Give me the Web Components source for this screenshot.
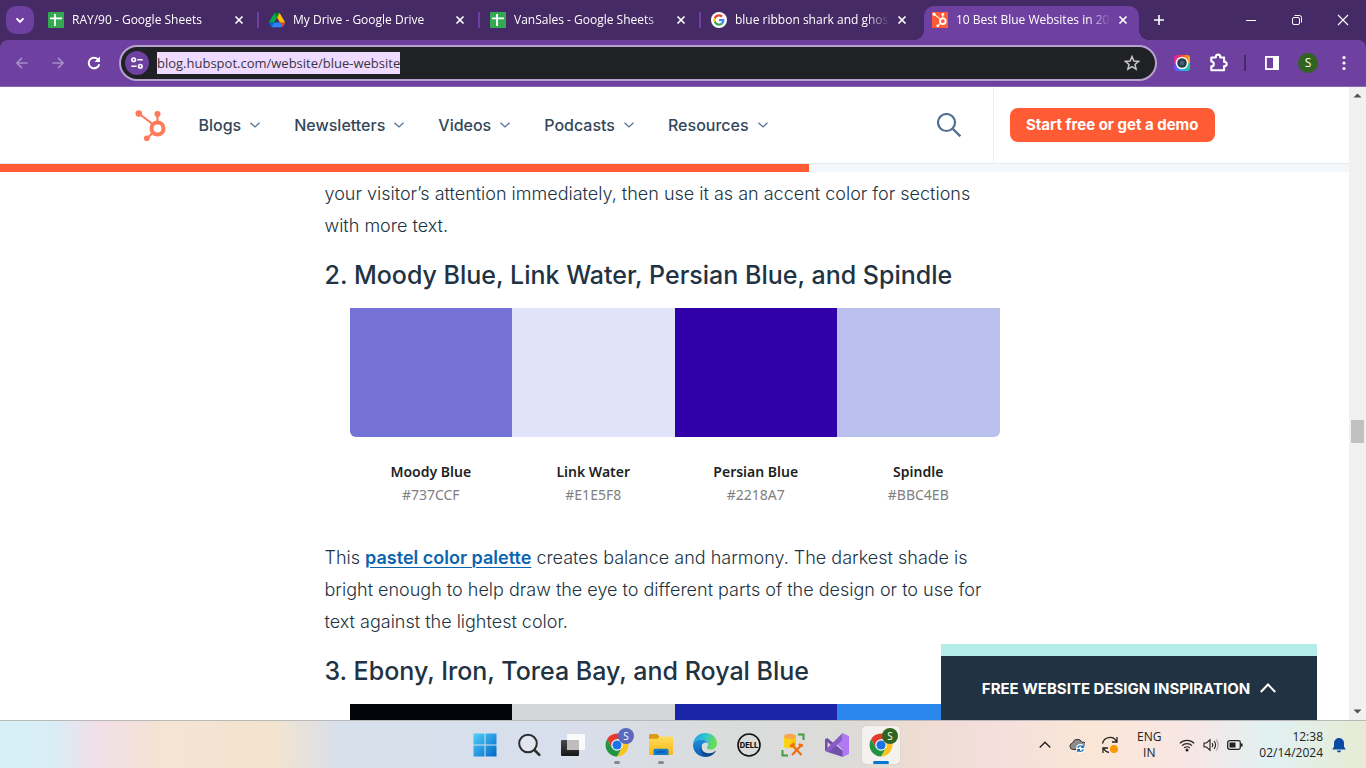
<!DOCTYPE html>
<html lang="en">
<head>
<meta charset="utf-8">
<title>10 Best Blue Websites</title>
<style>
  html, body {
    height: 100%;
    margin: 0;
  }
  body {
    font-family: Inter, "Open Sans", sans-serif;
    background: #fff;
  }
  blog-article p a {
    color: #0b64b0;
    font-weight: 600;
    text-decoration-thickness: 1px;
    text-underline-offset: 3px;
  }
</style>
</head>
<body>
<browser-window>
  <tab-strip slot="tabs">
    <browser-tab icon="sheets" label="RAY/90 - Google Sheets"></browser-tab>
    <browser-tab icon="drive" label="My Drive - Google Drive"></browser-tab>
    <browser-tab icon="sheets" label="VanSales - Google Sheets"></browser-tab>
    <browser-tab icon="google" label="blue ribbon shark and ghost"></browser-tab>
    <browser-tab icon="hubspot-tile" label="10 Best Blue Websites in 202" active></browser-tab>
  </tab-strip>
  <tool-bar slot="toolbar" url="blog.hubspot.com/website/blue-website"></tool-bar>

  <site-header slot="header" progress="60">
    <nav-item label="Blogs"></nav-item>
    <nav-item label="Newsletters"></nav-item>
    <nav-item label="Videos"></nav-item>
    <nav-item label="Podcasts"></nav-item>
    <nav-item label="Resources"></nav-item>
  </site-header>

  <blog-article>
    <p>your visitor’s attention immediately, then use it as an accent color for sections with more text.</p>
    <h3>2. Moody Blue, Link Water, Persian Blue, and Spindle</h3>
    <color-palette>
      <color-swatch name="Moody Blue" code="#737CCF" fill="#7673d7"></color-swatch>
      <color-swatch name="Link Water" code="#E1E5F8" fill="#e1e3fb"></color-swatch>
      <color-swatch name="Persian Blue" code="#2218A7" fill="#3000a9"></color-swatch>
      <color-swatch name="Spindle" code="#BBC4EB" fill="#bac0ee"></color-swatch>
    </color-palette>
    <p>This <a href="#pastel">pastel color palette</a> creates balance and harmony. The darkest shade is bright enough to help draw the eye to different parts of the design or to use for text against the lightest color.</p>
    <h3>3. Ebony, Iron, Torea Bay, and Royal Blue</h3>
    <color-palette>
      <color-swatch fill="#020509"></color-swatch>
      <color-swatch fill="#d3d5d8"></color-swatch>
      <color-swatch fill="#1b26a6"></color-swatch>
      <color-swatch fill="#2b87ec"></color-swatch>
    </color-palette>
  </blog-article>

  <promo-drawer slot="promo">FREE WEBSITE DESIGN INSPIRATION</promo-drawer>
  <scroll-rail slot="rail"></scroll-rail>

  <task-bar slot="taskbar">
    <task-app icon="windows" label="Start"></task-app>
    <task-app icon="magnifier" label="Search"></task-app>
    <task-app icon="taskview" label="Task view"></task-app>
    <task-app icon="chrome" label="Chrome" badge="S" badge-color="#5a68bd" running></task-app>
    <task-app icon="folder" label="File Explorer" running></task-app>
    <task-app icon="edge" label="Edge"></task-app>
    <task-app icon="dell" label="Dell"></task-app>
    <task-app icon="dbtools" label="Database tools"></task-app>
    <task-app icon="vs" label="Visual Studio"></task-app>
    <task-app icon="chrome" label="Chrome" badge="S" badge-color="#31651f" active></task-app>
  </task-bar>
</browser-window>

<script>
(() => {
  const SPROCKET = (color) => `
    <g fill="${color}" stroke="${color}">
      <path d="M4 4L17 14M22 4V11M11 29L17 23" fill="none" stroke-width="2.2"/>
      <circle cx="22" cy="18.5" r="6" fill="none" stroke-width="4"/>
      <g stroke="none"><circle cx="3.3" cy="3.6" r="3.3"/><circle cx="22" cy="4" r="3"/><circle cx="11.3" cy="28.3" r="2.9"/></g>
    </g>`;

  // name: [viewBox, markup]
  const ICONS = {
    sheets: ['0 0 16 16', '<rect width="16" height="16" rx="1" fill="#34a853"/><path d="M2 6.3H14M7 2V14" stroke="#fff" stroke-width="1.8"/>'],
    drive: ['0 0 87.3 78', `
      <path d="m6.6 66.85 3.85 6.65c.8 1.4 1.95 2.5 3.3 3.3l13.75-23.8h-27.5c0 1.55.4 3.1 1.2 4.5z" fill="#0066da"/>
      <path d="m43.65 25-13.75-23.8c-1.35.8-2.5 1.9-3.3 3.3l-25.4 44a9.06 9.06 0 0 0 -1.2 4.5h27.5z" fill="#00ac47"/>
      <path d="m73.55 76.8c1.35-.8 2.5-1.9 3.3-3.3l1.6-2.75 7.65-13.25c.8-1.4 1.2-2.95 1.2-4.5h-27.502l5.852 11.5z" fill="#ea4335"/>
      <path d="m43.65 25 13.75-23.8c-1.35-.8-2.9-1.2-4.5-1.2h-18.5c-1.6 0-3.15.45-4.5 1.2z" fill="#00832d"/>
      <path d="m59.8 53h-32.3l-13.75 23.8c1.35.8 2.9 1.2 4.5 1.2h50.8c1.6 0 3.15-.45 4.5-1.2z" fill="#2684fc"/>
      <path d="m73.4 26.5-12.7-22c-.8-1.4-1.95-2.5-3.3-3.3l-13.75 23.8 16.15 28h27.45c0-1.55-.4-3.1-1.2-4.5z" fill="#ffba00"/>`],
    google: ['-10 -10 68 68', `
      <circle cx="24" cy="24" r="34" fill="#fff"/>
      <path fill="#EA4335" d="M24 9.5c3.54 0 6.71 1.22 9.21 3.6l6.85-6.85C35.9 2.38 30.47 0 24 0 14.62 0 6.51 5.38 2.56 13.22l7.98 6.19C12.43 13.72 17.74 9.5 24 9.5z"/>
      <path fill="#4285F4" d="M46.98 24.55c0-1.57-.15-3.09-.38-4.55H24v9.02h12.94c-.58 2.96-2.26 5.48-4.78 7.18l7.73 6c4.51-4.18 7.09-10.36 7.09-17.65z"/>
      <path fill="#FBBC05" d="M10.53 28.59c-.48-1.45-.76-2.99-.76-4.59s.27-3.14.76-4.59l-7.98-6.19C.92 16.46 0 20.12 0 24c0 3.88.92 7.54 2.56 10.78l7.97-6.19z"/>
      <path fill="#34A853" d="M24 48c6.48 0 11.93-2.13 15.89-5.81l-7.73-6c-2.15 1.45-4.92 2.3-8.16 2.3-6.26 0-11.57-4.22-13.47-9.91l-7.98 6.19C6.51 42.62 14.62 48 24 48z"/>`],
    'hubspot-tile': ['-1 -1 34 34', `<rect x="-1" y="-1" width="34" height="34" fill="#ff5c35"/>${SPROCKET('#fff')}`],
    hubspot: ['0 0 30 31', SPROCKET('#ff7a59')],
    close: ['0 0 16 16', '<path d="M4.5 4.5L11.5 11.5M11.5 4.5L4.5 11.5" stroke="currentColor" stroke-width="1.7"/>'],
    down: ['0 0 16 16', '<path d="M4.5 6.3L8 9.8L11.5 6.3" fill="none" stroke="currentColor" stroke-width="1.9"/>'],
    plus: ['0 0 16 16', '<path d="M8 3V13M3 8H13" stroke="currentColor" stroke-width="1.6"/>'],
    minimize: ['0 0 16 16', '<path d="M3 8.5H13" stroke="currentColor"/>'],
    restore: ['0 0 16 16', '<rect x="3.5" y="5.5" width="7" height="7" rx="1.5" fill="none" stroke="currentColor"/><path d="M5.5 3.5H10.5A2 2 0 0 1 12.5 5.5V10.5" fill="none" stroke="currentColor"/>'],
    exit: ['0 0 16 16', '<path d="M3 3L13 13M13 3L3 13" stroke="currentColor" stroke-width="1.1"/>'],
    back: ['0 0 16 16', '<path d="M14.5 8H2.5M8 2.2L2.2 8L8 13.8" fill="none" stroke="currentColor" stroke-width="1.9"/>'],
    forward: ['0 0 16 16', '<path d="M1.5 8H13.5M8 2.2L13.8 8L8 13.8" fill="none" stroke="currentColor" stroke-width="1.9"/>'],
    reload: ['0 0 16 16', '<path d="M13.2 9.2A5.3 5.3 0 1 1 11.8 4.3L13.2 5.7" fill="none" stroke="currentColor" stroke-width="2"/><path d="M14 1.5V7H8.5Z" fill="currentColor"/>'],
    tune: ['0 0 16 16', '<g fill="none" stroke="currentColor" stroke-width="1.9"><circle cx="4.2" cy="4.3" r="2"/><path d="M8.5 4.3H14.5M1.5 11.7H7.5"/><circle cx="11.8" cy="11.7" r="2"/></g>'],
    star: ['0 0 16 16', '<path d="M8 1.6L9.9 6L14.6 6.4L11 9.5L12.1 14.1L8 11.6L3.9 14.1L5 9.5L1.4 6.4L6.1 6Z" fill="none" stroke="currentColor" stroke-width="1.5"/>'],
    camera: ['0 0 16 16', `
      <defs><linearGradient id="a" x1="0" y1="0" x2="1" y2="0"><stop stop-color="#e91ea0"/><stop offset=".5" stop-color="#f5423c"/><stop offset="1" stop-color="#ffb300"/></linearGradient>
      <linearGradient id="b" x1="0" y1="0" x2="1" y2="0"><stop stop-color="#7b3ff2"/><stop offset=".5" stop-color="#1fa2ff"/><stop offset="1" stop-color="#20d38a"/></linearGradient></defs>
      <path d="M0 8V3A3 3 0 0 1 3 0H13A3 3 0 0 1 16 3V8Z" fill="url(#a)"/><path d="M0 8V13A3 3 0 0 0 3 16H13A3 3 0 0 0 16 13V8Z" fill="url(#b)"/>
      <circle cx="8" cy="8" r="6.3" fill="#fff"/><circle cx="8" cy="8" r="4.8" fill="#2c3d4c"/><circle cx="8" cy="8" r="2.2" fill="#48637a"/>`],
    puzzle: ['0 0 18 18', '<path d="M3 4H7V3.5A2 2 0 0 1 11 3.5V4H14.5V8H15A1.8 1.8 0 0 1 15 11.7H14.5V15.5H3V12A2.2 2.2 0 0 0 3 7.6Z" fill="none" stroke="currentColor" stroke-width="1.9" stroke-linejoin="round"/>'],
    panel: ['0 0 16 16', '<rect x="1.9" y="1.9" width="12.2" height="12.2" fill="none" stroke="currentColor" stroke-width="1.8"/><path d="M9 2H14V14H9Z" fill="currentColor"/>'],
    dots: ['0 0 16 16', '<g fill="currentColor"><circle cx="8" cy="2.5" r="1.6"/><circle cx="8" cy="8" r="1.6"/><circle cx="8" cy="13.5" r="1.6"/></g>'],
    chevron: ['0 0 10 10', '<path d="M.5 2.8L5 7L9.5 2.8" fill="none" stroke="#516f90" stroke-width="1.2"/>'],
    search: ['0 0 24 24', '<circle cx="9.5" cy="9.5" r="8.5" fill="none" stroke="#516f90" stroke-width="2.2"/><path d="M15.5 15.5L23.3 23.3" stroke="#516f90" stroke-width="2.4"/>'],
    up: ['0 0 16 16', '<path d="M.8 12L8 4.5L15.2 12" fill="none" stroke="currentColor" stroke-width="2"/>'],
    'arrow-up': ['0 0 9 9', '<path d="M.5 6.5L4.5 2.5L8.5 6.5Z" fill="#505050"/>'],
    'arrow-down': ['0 0 9 9', '<path d="M.5 2.5L4.5 6.5L8.5 2.5Z" fill="#505050"/>'],
    windows: ['0 0 24 24', '<defs><linearGradient id="w" x1="0" y1="0" x2="1" y2="1"><stop stop-color="#50d0fb"/><stop offset="1" stop-color="#0067c5"/></linearGradient></defs><path d="M.5.5H11.5V11.5H.5ZM12.5.5H23.5V11.5H12.5ZM.5 12.5H11.5V23.5H.5ZM12.5 12.5H23.5V23.5H12.5Z" fill="url(#w)"/>'],
    magnifier: ['0 0 24 24', '<circle cx="11" cy="10.5" r="8.8" fill="#e8edf4" fill-opacity=".6" stroke="#2d2d2d" stroke-width="2"/><path d="M17.5 17L22.3 21.8" stroke="#2d2d2d" stroke-width="2.6" stroke-linecap="round"/>'],
    taskview: ['0 0 24 24', '<defs><linearGradient id="t" x1="0" y1="0" x2="0" y2="1"><stop stop-color="#4a4a4a"/><stop offset="1" stop-color="#161616"/></linearGradient></defs><rect y="7" width="18" height="16" rx="1" fill="url(#t)"/><rect x="6" y="1" width="18" height="16" rx="1" fill="#fafafa"/><path d="M6 7H18V17H6Z" fill="#bdbdbd"/>'],
    chrome: ['1 1 46 46', `
      <path d="M4.95 13A22 22 0 0 1 43.05 13H24L14.47 29.5Z" fill="#e33b2e"/>
      <path d="M43.05 13A22 22 0 0 1 24 46L33.53 29.5L24 13Z" fill="#fcc31e"/>
      <path d="M24 46A22 22 0 0 1 4.95 13L14.47 29.5H33.53Z" fill="#229342"/>
      <circle cx="24" cy="24" r="11" fill="#fff"/><circle cx="24" cy="24" r="8.8" fill="#1a73e8"/>`],
    folder: ['0 0 24 24', '<defs><linearGradient id="f" x1="0" y1="0" x2="0" y2="1"><stop stop-color="#ffdb5c"/><stop offset="1" stop-color="#fcb813"/></linearGradient></defs><path d="M0 2.5A1.5 1.5 0 0 1 1.5 1H8L10.5 3.5V8H0Z" fill="#dd9a10"/><path d="M0 5.8H8.5L10.8 3.5H22.5A1.5 1.5 0 0 1 24 5V20.5A1.5 1.5 0 0 1 22.5 22H1.5A1.5 1.5 0 0 1 0 20.5Z" fill="url(#f)"/><path d="M4.5 22V17.5A1.8 1.8 0 0 1 6.3 15.7H17.7A1.8 1.8 0 0 1 19.5 17.5V22Z" fill="#1479d0"/><path d="M8 18.9H16" stroke="#0b4f9a" stroke-width="1.2"/>'],
    edge: ['0 0 24 24', `
      <defs><linearGradient id="e" x1="0" y1="0" x2="1" y2=".3"><stop stop-color="#1b9de2"/><stop offset=".5" stop-color="#2cc3d5"/><stop offset="1" stop-color="#6bdd54"/></linearGradient>
      <linearGradient id="g" x1="0" y1="0" x2="0" y2="1"><stop stop-color="#1a8fdb"/><stop offset="1" stop-color="#0c5cb4"/></linearGradient></defs>
      <path d="M.1 11C.8 4.5 6 0 12.2 0C19 0 24 4.8 24 10.4C24 14.2 21 16.5 17.8 16.5C15 16.5 13.8 15.5 13.8 14.7C13.8 14 15 13.4 15 11.6C15 9 12.5 6.6 8.5 6.6C4.5 6.6 1.5 8.5.1 11Z" fill="url(#e)"/>
      <path d="M.1 11C1.8 8 5 6.6 8.5 6.6C12 6.6 14.3 8.4 14.8 10.5C13.5 9.2 11.5 9.3 10 10.5C7 13 8 18.5 12.8 21.3C14 22 14.8 22.8 15 23.5C8 25.3.3 20.5.1 12.5Z" fill="url(#g)"/>
      <path d="M9 11.5C7 16 10.5 20.5 16 20.3C18.5 20.2 20.7 19.2 21.9 18.2C22.4 17.9 22.9 18.2 22.5 18.8C20.5 22 17.5 23.5 14.5 23.7C8 23 5.5 16 9 11.5Z" fill="#114a8b"/>`],
    dell: ['0 0 24 24', '<circle cx="12" cy="12" r="11" fill="none" stroke="#111" stroke-width="1.6"/><text x="12" y="14.7" text-anchor="middle" font-family="Inter, sans-serif" font-size="7.5" font-weight="800" fill="#111">DELL</text>'],
    dbtools: ['0 0 24 24', '<path d="M3 3.500V14C3 15.7 15 15.7 15 14V3.5Z" fill="#fbd316"/><path d="M10 4V15C13 15 15 14.6 15 14V3.5Z" fill="#ffc400"/><ellipse cx="9" cy="3.5" rx="6" ry="2.7" fill="#f6a94c"/><path d="M17 1.5H22.5V7M1.5 17V22.5H7" fill="none" stroke="#3f9c46" stroke-width="2"/><path d="M11 22L20 12.5M11.5 12.5L20.5 22" stroke="#ef6c12" stroke-width="2.2"/><path d="M9 13.5L13.5 10.5M18 10.8L20 12.7L22 12" stroke="#ef6c12" stroke-width="2.4" fill="none"/>'],
    vs: ['0 0 24 24', '<path d="M0 6.3L2.4 5L18 18V24L2.4 19L0 17.5ZM2.6 9V15L5.6 12Z" fill="#7350a8" fill-rule="evenodd"/><path d="M17.5 0L24 3V21L17.5 24V16.8L12.5 12L17.5 7.2Z" fill="#b179f1"/><path d="M17.5 0V7.5L4 18.8L2.4 19L0 17.5Z" fill="#8a5cc9"/>'],
    tray: ['0 0 16 16', '<path d="M2.7 10.5L8 5.2L13.3 10.5" fill="none" stroke="currentColor" stroke-width="1.4"/>'],
    cloud: ['0 0 16 16', '<path d="M3.8 12.5A3.3 3.3 0 0 1 3.6 6A5 5 0 0 1 13 5.3A3.5 3.5 0 0 1 14.5 12.5Z" fill="#8d8d8d" stroke="#333" stroke-width="1"/><circle cx="11.5" cy="11.5" r="4.5" fill="#fff"/><path d="M8.6 10.8A3 3 0 0 1 14 10.2M14.4 12.2A3 3 0 0 1 9 12.9M14.2 8V10.4H12M8.8 15V12.7H11" fill="none" stroke="#0f6cbd" stroke-width="1.2"/>'],
    sync: ['0 0 18 18', '<path d="M1.5 7.5A7.5 7.5 0 0 1 15.5 5.5M16 1V6H11M8 16.5A7.5 7.5 0 0 1 2.5 12M2 17V12H7" fill="none" stroke="#222" stroke-width="1.3"/><circle cx="13" cy="13" r="4" fill="#fa9600"/>'],
    wifi: ['0 0 16 16', '<g fill="none" stroke="currentColor" stroke-width="1.2"><path d="M.8 6.3A10.2 10.2 0 0 1 15.2 6.3M3 8.7A7 7 0 0 1 13 8.7M5.2 11A4 4 0 0 1 10.8 11"/></g><circle cx="8" cy="13" r="1.5" fill="currentColor"/>'],
    sound: ['0 0 16 16', '<g fill="none" stroke="currentColor" stroke-width="1.1"><path d="M1 6H3.5L7 2.8V13.2L3.5 10H1Z"/><path d="M9 6A3 3 0 0 1 9 10M11 4.2A5.3 5.3 0 0 1 11 11.8"/><path d="M13 2.5A8 8 0 0 1 13 13.5" opacity=".35"/></g>'],
    battery: ['0 0 16 16', '<rect x=".7" y="3.7" width="12.6" height="8.6" rx="1.8" fill="none" stroke="currentColor" stroke-width="1.3"/><path d="M2.5 5.5H8.5V10.5H2.5ZM14 6.5H15.6V9.5H14Z" fill="currentColor"/>'],
    bell: ['0 0 16 16', '<path d="M8 1A5 5 0 0 0 3 6V9.5L1.3 12.5H14.7L13 9.5V6A5 5 0 0 0 8 1ZM6 13.5A2 2 0 0 0 10 13.5Z" fill="#0b4aa2"/>'],
  };

  // shared by every element: renders its markup once into an open root
  class BaseElement extends HTMLElement {
    constructor() {
      super();
      this.attachShadow({ mode: 'open' });
    }

    attr(name) {
      return this.getAttribute(name) || '';
    }

    connectedCallback() {
      this.shadowRoot.innerHTML = `
        <style>
          :host, *, *::after, *::before { box-sizing: border-box; }
          button {
            padding: 0;
            border: 0;
            background: none;
            color: inherit;
            font: inherit;
            display: flex;
            align-items: center;
            justify-content: center;
          }
          a { color: inherit; text-decoration: none; }
        </style>
        ${this.render()}
      `;
    }
  }

  class UiIcon extends BaseElement {
    render() {
      const [viewBox, markup] = ICONS[this.attr('name')];
      const size = this.attr('size') || 16;
      return `
        <style>
          :host { display: block; flex: none; width: ${size}px; height: ${size}px; }
          svg { display: block; width: 100%; height: 100%; }
        </style>
        <svg viewBox="${viewBox}" aria-hidden="true">${markup}</svg>
      `;
    }
  }

  class BrowserWindow extends BaseElement {
    render() {
      return `
        <style>
          :host {
            height: 100vh;
            display: flex;
            flex-direction: column;
          }
          .view { flex: 1; min-height: 0; display: flex; }
          .page {
            flex: 1;
            min-width: 0;
            overflow: hidden;
            position: relative;
            background: #fff;
          }
          ::slotted([slot="promo"]) { position: absolute; right: 32px; bottom: 0; }
        </style>
        <slot name="tabs"></slot>
        <slot name="toolbar"></slot>
        <div class="view">
          <div class="page">
            <slot name="header"></slot>
            <slot></slot>
            <slot name="promo"></slot>
          </div>
          <slot name="rail"></slot>
        </div>
        <slot name="taskbar"></slot>
      `;
    }
  }

  class TabStrip extends BaseElement {
    render() {
      return `
        <style>
          :host {
            display: flex;
            height: 40px;
            flex: none;
            background: #462a66;
            color: #fff;
          }
          .list { margin: 6px; }
          .list button { width: 28px; height: 28px; border-radius: 10px; background: #6e40a0; }
          .tabs { flex: 1; min-width: 0; display: flex; gap: 6px; }
          .new { width: 28px; }
          .controls { display: flex; }
          .controls button { width: 46px; }
        </style>
        <div class="list"><button aria-label="Search tabs"><ui-icon name="down"></ui-icon></button></div>
        <div class="tabs">
          <slot></slot>
          <button class="new" aria-label="New tab"><ui-icon name="plus"></ui-icon></button>
        </div>
        <div class="controls">
          <button aria-label="Minimize"><ui-icon name="minimize"></ui-icon></button>
          <button aria-label="Restore"><ui-icon name="restore"></ui-icon></button>
          <button aria-label="Close"><ui-icon name="exit"></ui-icon></button>
        </div>
      `;
    }
  }

  class BrowserTab extends BaseElement {
    render() {
      return `
        <style>
          :host {
            flex: 0 1 215px;
            min-width: 0;
            display: flex;
            align-items: center;
            position: relative;
            margin-top: 6px;
            padding: 0 8px 6px;
            font: 12px/16px "Open Sans", sans-serif;
          }
          :host([active]) { background: #6e40a0; border-radius: 10px 10px 0 0; }
          /* divider between idle tabs */
          :host(:not([active]))::after {
            content: "";
            position: absolute;
            right: -4px;
            top: 6px;
            width: 2px;
            height: 16px;
            background: #6e40a0;
          }
          :host(:nth-child(4))::after { display: none; }
          /* feet of the active tab */
          :host([active])::before,
          :host([active])::after {
            content: "";
            position: absolute;
            bottom: 0;
            width: 10px;
            height: 10px;
          }
          :host([active])::before {
            left: -10px;
            background: radial-gradient(circle at 0 0, transparent 10px, #6e40a0 10px);
          }
          :host([active])::after {
            right: -10px;
            background: radial-gradient(circle at 100% 0, transparent 10px, #6e40a0 10px);
          }
          a {
            flex: 1;
            min-width: 0;
            margin: 0 0 0 8px;
            overflow: hidden;
            white-space: nowrap;
            -webkit-mask-image: linear-gradient(to left, transparent 4px, #000 28px);
            mask-image: linear-gradient(to left, transparent 4px, #000 28px);
          }
        </style>
        <ui-icon name="${this.attr('icon')}"></ui-icon>
        <a href="#tab">${this.attr('label')}</a>
        <button aria-label="Close tab"><ui-icon name="close"></ui-icon></button>
      `;
    }
  }

  class ToolBar extends BaseElement {
    render() {
      return `
        <style>
          :host { display: block; flex: none; background: #462a66; color: #fff; }
          .bar {
            display: flex;
            align-items: center;
            height: 47px;
            padding: 0 4px;
            background: #6e40a0;
            border-bottom: 1px solid #8b66b3;
            border-radius: 8px 8px 0 0;
          }
          .bar > button { width: 36px; height: 36px; }
          .bar > button:disabled { color: #a68cc6; }
          .address {
            flex: 1;
            display: flex;
            align-items: center;
            height: 36px;
            margin: 0 7px;
            padding: 0 15px 0 4px;
            background: #202124;
            border: 2px solid #b7a1cf;
            border-radius: 18px;
          }
          .site { width: 24px; height: 24px; border-radius: 50%; background: #6e40a0; }
          input {
            field-sizing: content;
            margin: 0 auto 0 8px;
            padding: 0;
            height: 22px;
            border: 0;
            outline: 0;
            background: #efdbff;
            color: #3a3442;
            font: 13px "Open Sans", sans-serif;
          }
          .star { color: #c7c7c7; }
          .sep { width: 2px; height: 16px; margin: 0 8px; background: #462a66; }
          .avatar {
            width: 20px;
            height: 20px;
            border-radius: 50%;
            background: #31651f;
            font: 12px/20px "Open Sans", sans-serif;
          }
        </style>
        <div class="bar">
          <button aria-label="Back" disabled><ui-icon name="back" size="14"></ui-icon></button>
          <button aria-label="Forward" disabled><ui-icon name="forward" size="14"></ui-icon></button>
          <button aria-label="Reload"><ui-icon name="reload"></ui-icon></button>
          <div class="address">
            <button class="site" aria-label="Site information"><ui-icon name="tune" size="14"></ui-icon></button>
            <input aria-label="Address" value="${this.attr('url')}" size="30">
            <button class="star" aria-label="Bookmark"><ui-icon name="star"></ui-icon></button>
          </div>
          <button aria-label="Screenshot"><ui-icon name="camera"></ui-icon></button>
          <button aria-label="Extensions"><ui-icon name="puzzle" size="20"></ui-icon></button>
          <span class="sep"></span>
          <button aria-label="Side panel"><ui-icon name="panel"></ui-icon></button>
          <button aria-label="Profile"><span class="avatar">S</span></button>
          <button aria-label="Menu"><ui-icon name="dots"></ui-icon></button>
        </div>
      `;
    }
  }

  class SiteHeader extends BaseElement {
    render() {
      return `
        <style>
          :host { display: block; position: relative; background: #fff; }
          .inner {
            display: flex;
            max-width: 1080px;
            height: 76px;
            margin: 0 auto;
          }
          .logo { display: flex; align-items: center; margin-right: 33px; }
          nav { display: flex; gap: 34px; flex: 1; }
          .search { margin-right: 32px; }
          .cta {
            display: flex;
            align-items: center;
            padding-left: 16px;
            border-left: 1px solid #eaf0f6;
          }
          .cta a {
            padding: 0 16px;
            border-radius: 8px;
            background: #ff5c35;
            color: #fff;
            font-size: 15px;
            font-weight: 700;
            line-height: 34px;
          }
          progress {
            display: block;
            width: 100%;
            height: 8px;
            border: 0;
            appearance: none;
          }
          .line { border-top: 1px solid #e6ebf1; }
          progress::-webkit-progress-bar { background: #f5f8fa; }
          progress::-webkit-progress-value { background: #ff5c35; }
        </style>
        <div class="inner">
          <a class="logo" href="#home" aria-label="Home"><ui-icon name="hubspot" size="31"></ui-icon></a>
          <nav><slot></slot></nav>
          <button class="search" aria-label="Search"><ui-icon name="search" size="24"></ui-icon></button>
          <div class="cta"><a href="#demo">Start free or get a demo</a></div>
        </div>
        <div class="line"><progress value="${this.attr('progress')}" max="100" aria-label="Reading progress"></progress></div>
      `;
    }
  }

  class NavItem extends BaseElement {
    render() {
      return `
        <style>
          :host { display: flex; }
          button { gap: 9px; color: #33475b; font-size: 16px; font-weight: 500; white-space: nowrap; }
        </style>
        <button aria-haspopup="true">${this.attr('label')}<ui-icon name="chevron" size="10"></ui-icon></button>
      `;
    }
  }

  class BlogArticle extends BaseElement {
    render() {
      return `
        <style>
          :host {
            display: flex;
            flex-direction: column;
            gap: 17px;
            max-width: 700px;
            margin: 0 auto;
            padding-top: 6px;
            color: #213343;
            font-size: 18px;
            font-weight: 300;
            line-height: 32px;
          }
          ::slotted(*) { margin: 0; }
          ::slotted(p) { max-width: 680px; }
          ::slotted(h3) { font-size: 25px; font-weight: 500; }
        </style>
        <slot></slot>
      `;
    }
  }

  class ColorPalette extends BaseElement {
    render() {
      return `
        <style>
          :host { display: block; padding: 0 25px 19px; }
          .row { display: grid; grid-template-columns: repeat(4, 1fr); }
        </style>
        <div class="row"><slot></slot></div>
      `;
    }
  }

  class ColorSwatch extends BaseElement {
    render() {
      return `
        <style>
          :host {
            display: block;
            text-align: center;
            font: 14px/23px "Noto Sans", sans-serif;
          }
          .fill { height: 129px; margin-bottom: 23px; background: ${this.attr('fill')}; }
          :host(:first-child) .fill { border-bottom-left-radius: 6px; }
          :host(:last-child) .fill { border-bottom-right-radius: 6px; }
          .name { font-weight: 600; color: #1d1f22; }
          .code { color: #808080; }
        </style>
        <div class="fill"></div>
        <div class="name">${this.attr('name')}</div>
        <div class="code">${this.attr('code')}</div>
      `;
    }
  }

  class PromoDrawer extends BaseElement {
    render() {
      return `
        <style>
          :host { display: block; width: 376px; background: #213343; border-top: 12px solid #b4ecea; }
          button {
            width: 100%;
            height: 64px;
            gap: 10px;
            color: #fff;
            font-size: 15px;
            font-weight: 700;
          }
        </style>
        <button aria-expanded="false"><slot></slot><ui-icon name="up"></ui-icon></button>
      `;
    }
  }

  class ScrollRail extends BaseElement {
    render() {
      return `
        <style>
          :host { display: flex; flex-direction: column; width: 17px; background: #f1f1f1; }
          button { height: 17px; }
          .track { flex: 1; display: grid; grid-template-rows: 316fr 23px 260fr; }
          .thumb { grid-row: 2; margin: 0 2px; background: #c1c1c1; }
        </style>
        <button aria-label="Scroll up"><ui-icon name="arrow-up" size="9"></ui-icon></button>
        <div class="track"><div class="thumb"></div></div>
        <button aria-label="Scroll down"><ui-icon name="arrow-down" size="9"></ui-icon></button>
      `;
    }
  }

  class TaskBar extends BaseElement {
    render() {
      return `
        <style>
          :host {
            display: grid;
            grid-template-columns: 1fr auto 1fr;
            flex: none;
            height: 48px;
            border-top: 1px solid #b9b9b9;
            background: linear-gradient(90deg, #d6f0f8, #daedf5 4%, #f1dfe8 7%, #f4e4d2 12%, #f3e4d0 20%,
              #d7dfea 25%, #d7dfed 40%, #dadcdd 52%, #dbdbd9 62%, #efdcd2 67%, #f4dfdd 73%, #fbe6d6 80%,
              #f8e6e4 87%, #e1f1f3 93%, #e6ecd3 100%);
            color: #222;
            font: 12px/16px "Open Sans", sans-serif;
          }
          .apps { grid-column: 2; display: flex; align-items: center; }
          .tray { display: flex; align-items: center; justify-content: flex-end; gap: 16px; padding-right: 19px; }
          .lang { width: 28px; }
          .quick { gap: 8px; }
          .clock { gap: 8px; text-align: right; }
        </style>
        <div class="apps"><slot></slot></div>
        <div class="tray">
          <button aria-label="Hidden icons"><ui-icon name="tray"></ui-icon></button>
          <button aria-label="Cloud storage"><ui-icon name="cloud"></ui-icon></button>
          <button aria-label="Updates"><ui-icon name="sync" size="18"></ui-icon></button>
          <button class="lang"><span>ENG<br>IN</span></button>
          <button class="quick" aria-label="Network, sound, battery">
            <ui-icon name="wifi"></ui-icon><ui-icon name="sound"></ui-icon><ui-icon name="battery"></ui-icon>
          </button>
          <button class="clock"><span>12:38<br>02/14/2024</span><ui-icon name="bell"></ui-icon></button>
        </div>
      `;
    }
  }

  class TaskApp extends BaseElement {
    render() {
      const badge = this.attr('badge');
      return `
        <style>
          :host { display: block; width: 44px; }
          button {
            position: relative;
            width: 38px;
            height: 38px;
            margin: 0 auto;
            border-radius: 4px;
          }
          :host([active]) button { background: #f5f1ee; box-shadow: 0 0 1px #999; }
          .badge {
            position: absolute;
            top: 2px;
            right: 2px;
            width: 16px;
            height: 16px;
            border-radius: 50%;
            background: ${this.attr('badge-color')};
            color: #fff;
            font: 10px/16px "Open Sans", sans-serif;
          }
          .mark {
            position: absolute;
            bottom: 0;
            width: 6px;
            height: 3px;
            border-radius: 2px;
            background: #858a90;
          }
          :host([active]) .mark { width: 16px; background: #0078d4; }
        </style>
        <button aria-label="${this.attr('label')}">
          <ui-icon name="${this.attr('icon')}" size="24"></ui-icon>
          ${badge ? `<span class="badge">${badge}</span>` : ''}
          ${this.hasAttribute('running') || this.hasAttribute('active') ? '<span class="mark"></span>' : ''}
        </button>
      `;
    }
  }

  const elements = {
    'ui-icon': UiIcon,
    'browser-window': BrowserWindow,
    'tab-strip': TabStrip,
    'browser-tab': BrowserTab,
    'tool-bar': ToolBar,
    'site-header': SiteHeader,
    'nav-item': NavItem,
    'blog-article': BlogArticle,
    'color-palette': ColorPalette,
    'color-swatch': ColorSwatch,
    'promo-drawer': PromoDrawer,
    'scroll-rail': ScrollRail,
    'task-bar': TaskBar,
    'task-app': TaskApp,
  };
  Object.entries(elements).forEach(([name, ctor]) => window.customElements.define(name, ctor));
})();
</script>
</body>
</html>
